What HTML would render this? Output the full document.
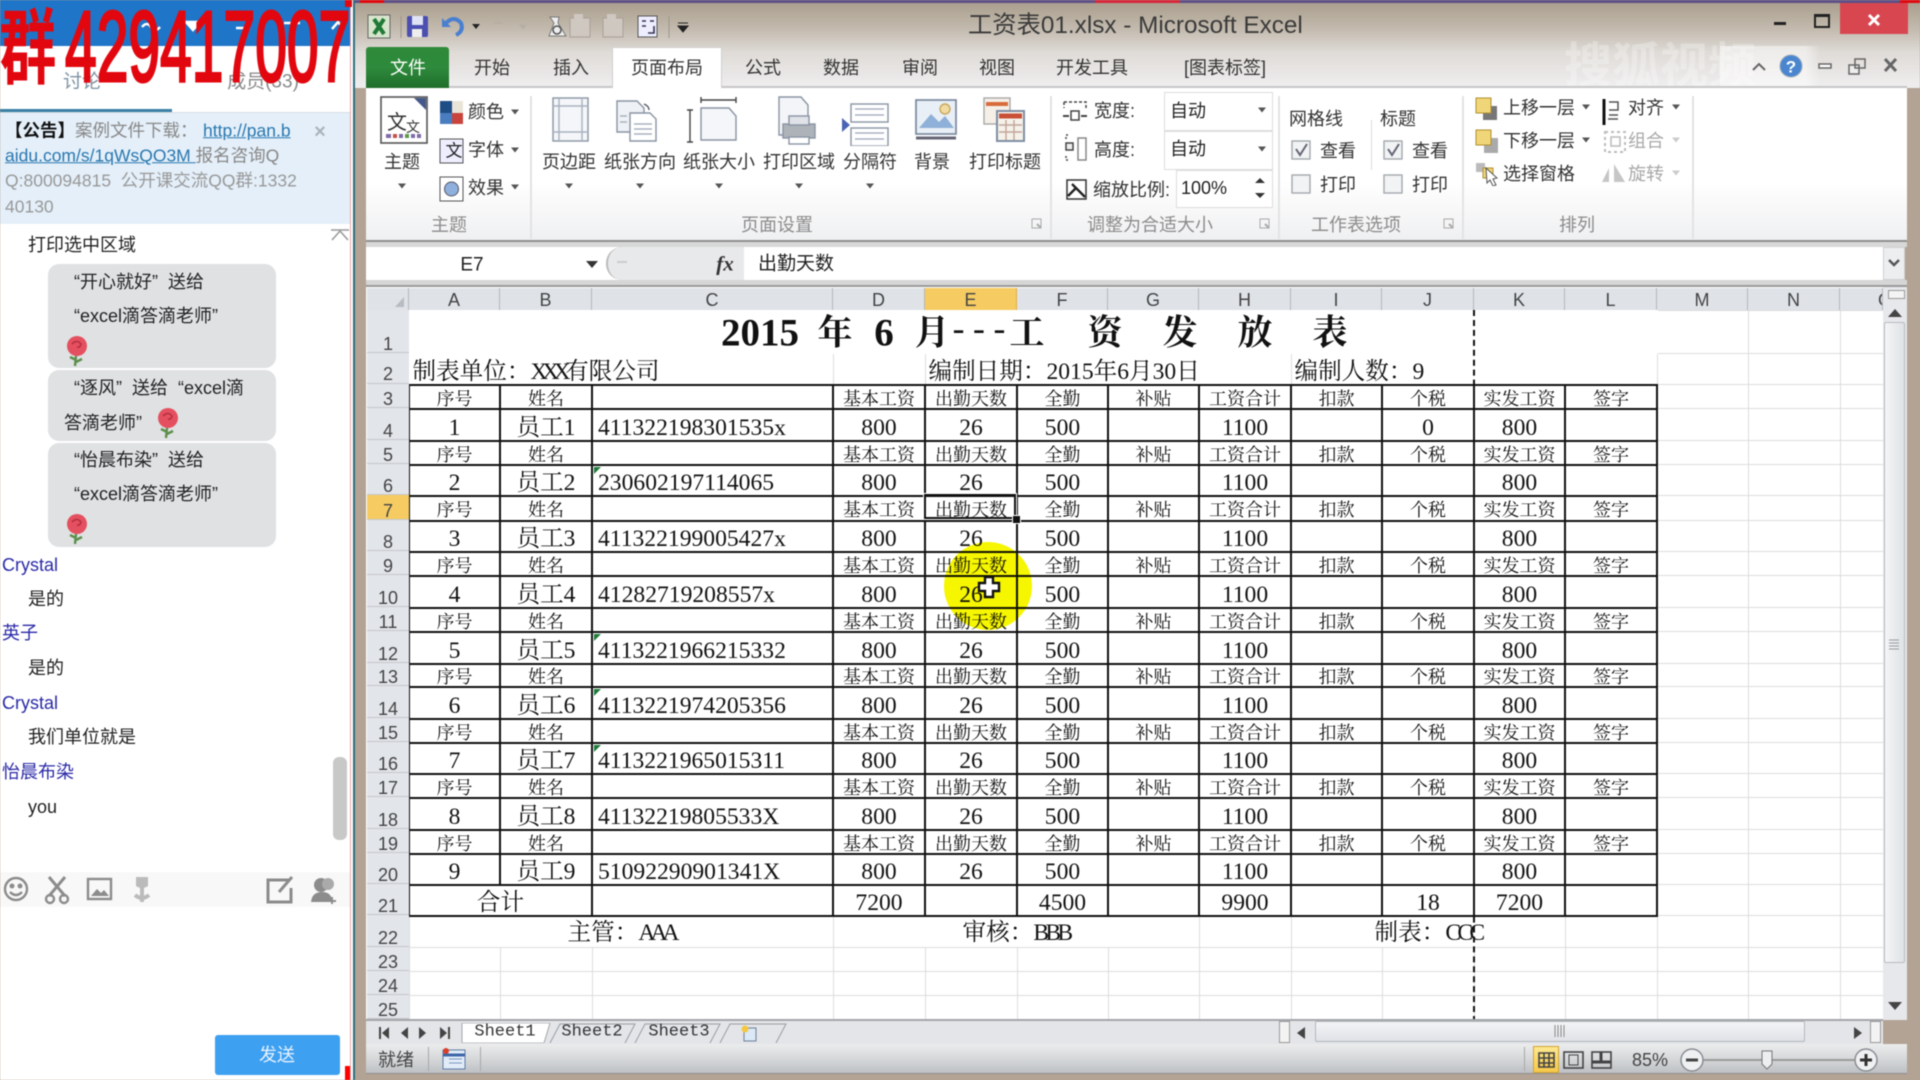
<!DOCTYPE html>
<html lang="zh"><head><meta charset="utf-8"><title>工资表01.xlsx - Microsoft Excel</title>
<style>
html,body{margin:0;padding:0}
body{width:1920px;height:1080px;overflow:hidden;position:relative;background:#b3a394;font-family:"Liberation Sans","Noto Sans CJK SC",sans-serif;color:#333;filter:blur(.45px)}
div,span,svg{position:absolute}
.c,.l{white-space:nowrap;line-height:1;font-size:18px;margin-top:1px}
.c{transform:translate(-50%,-50%)}
.l{transform:translateY(-50%)}
td span,.x{position:static}
.ar{width:0;height:0;border-left:4px solid transparent;border-right:4px solid transparent;border-top:5px solid #555;transform:translate(-50%,-50%)}
.g{color:#8b8b8b}
.d{color:#a8a8a8}
.sep{width:2px;top:96px;height:143px;background:#e2e3e5}
.chat{color:#222;font-size:18px}
.nm{color:#2a2aa8;font-size:18px}
.bb{left:48px;width:228px;background:#dfe1e3;border-radius:11px}
table{position:absolute;left:408px;top:310px;border-collapse:collapse;table-layout:fixed;width:1474px;font-family:"Liberation Serif","Noto Serif CJK SC",serif;color:#111}
td{border:1px solid #dcdcdc;padding:0;text-align:center;overflow:hidden;white-space:nowrap;font-size:23.6px;line-height:20px;vertical-align:middle}
tr.k td:nth-child(-n+12),tr.j td:nth-child(-n+11){border:2px solid #111}
tr.k td,tr.j td,tr.e td{padding-top:6px}
tr.o td{font-size:18px;line-height:16px;padding-top:4px}
tr.f td{padding-top:2px}
td.n{text-align:left;padding-left:5px;position:relative}
td b{font-weight:400}
i.tri{position:absolute;left:1px;top:1px;width:0;height:0;border-top:7px solid #1d7a3a;border-right:7px solid transparent}
.rh{left:367px;width:42px;background:#e2e5ea;border-bottom:1px solid #c4c6ca;box-sizing:border-box;color:#444;font-size:18px;line-height:18px;text-align:center}
.ch{top:288px;height:22px;background:#dfe3e8;border-right:1px solid #b4b7bc;box-sizing:border-box;color:#444;font-size:18px;line-height:25px;text-align:center}
.ti{font-family:"Liberation Serif","Noto Serif CJK SC",serif;font-weight:700;color:#111;font-size:35px;margin-top:0}
</style></head><body>

<!-- ===== chat panel ===== -->
<div style="left:0;top:0;width:350px;height:1080px;background:#fff"></div>
<div style="left:0;top:0;width:350px;height:46px;background:#1f75c8"></div>
<svg style="left:130px;top:14px" width="220" height="24" fill="none" stroke="#fff" stroke-width="2.5"><path d="M12 13q5-6 9 0t9 0"/><path d="M56 8h14l-7 8z" fill="#fff"/><path d="M106 14h14M154 9h16"/><path d="M202 15l6-7 6 7"/></svg>
<div class="c" style="left:82px;top:81px;font-size:19px;color:#7d93a3">讨论</div>
<div class="c" style="left:263px;top:81px;font-size:19px;color:#888">成员(33)</div>
<div style="left:0;top:109px;width:172px;height:3px;background:#3a7fa6"></div>
<div style="left:0;top:112px;width:350px;height:1px;background:#d6dde3"></div>
<div style="left:0;top:113px;width:350px;height:111px;background:#e4eff9"></div>
<div class="l" style="left:5px;top:130px;font-size:17.5px;color:#888"><span style="position:static;color:#111;font-weight:700">【公告】</span>案例文件下载：</div>
<div class="l" style="left:203px;top:130px;font-size:17.5px;color:#2a78b0;text-decoration:underline">http://pan.b</div>
<div class="c" style="left:320px;top:131px;font-size:20px;font-weight:700;color:#aab4bc">×</div>
<div class="l" style="left:5px;top:155px;font-size:17.5px;color:#888"><span style="position:static;color:#2a78b0;text-decoration:underline">aidu.com/s/1qWsQO3M </span>报名咨询Q</div>
<div class="l" style="left:5px;top:180px;font-size:17.5px;color:#999">Q:800094815&nbsp;&nbsp;公开课交流QQ群:1332</div>
<div class="l" style="left:5px;top:206px;font-size:17.5px;color:#999">40130</div>
<svg style="left:330px;top:228px" width="20" height="14" fill="none" stroke="#999" stroke-width="1.5"><path d="M2 12L10 3l8 9M1 2h18"/></svg>
<div class="l chat" style="left:28px;top:244px">打印选中区域</div>
<div class="bb" style="top:264px;height:104px"></div>
<div class="bb" style="top:370px;height:71px"></div>
<div class="bb" style="top:443px;height:104px"></div>
<div class="l chat" style="left:74px;top:281px">“开心就好”&nbsp;&nbsp;送给</div>
<div class="l chat" style="left:74px;top:315px">“excel滴答滴老师”</div>
<div class="l chat" style="left:74px;top:387px">“逐风”&nbsp;&nbsp;送给&nbsp;&nbsp;“excel滴</div>
<div class="l chat" style="left:64px;top:422px">答滴老师”</div>
<div class="l chat" style="left:74px;top:459px">“怡晨布染”&nbsp;&nbsp;送给</div>
<div class="l chat" style="left:74px;top:493px">“excel滴答滴老师”</div>
<svg width="0" height="0" style="left:0;top:0"><defs><symbol id="rose" viewBox="0 0 24 32"><path d="M11 21l-1 10M11 25l-6-3M11 27l6-3" stroke="#5c8f4c" stroke-width="2.4" fill="none"/><circle cx="12" cy="11" r="10" fill="#e4505f"/><path d="M7 9q5-5 9 0q-1 4-4 3" stroke="#b52f40" stroke-width="1.6" fill="none"/></symbol></defs></svg>
<svg style="left:65px;top:335px" width="24" height="32"><use href="#rose"/></svg>
<svg style="left:156px;top:407px" width="24" height="32"><use href="#rose"/></svg>
<svg style="left:65px;top:513px" width="24" height="32"><use href="#rose"/></svg>
<div class="l nm" style="left:2px;top:564px">Crystal</div>
<div class="l chat" style="left:28px;top:598px">是的</div>
<div class="l nm" style="left:2px;top:632px">英子</div>
<div class="l chat" style="left:28px;top:667px">是的</div>
<div class="l nm" style="left:2px;top:702px">Crystal</div>
<div class="l chat" style="left:28px;top:736px">我们单位就是</div>
<div class="l nm" style="left:2px;top:771px">怡晨布染</div>
<div class="l chat" style="left:28px;top:806px">you</div>
<div style="left:333px;top:757px;width:14px;height:83px;background:#c8c8c8;border-radius:6px"></div>
<div style="left:0;top:872px;width:350px;height:35px;background:#f8f8f8"></div>
<svg style="left:0;top:873px" width="350" height="34" fill="none" stroke="#8c8c8c" stroke-width="2.4">
<circle cx="16" cy="16" r="11"/><circle cx="12" cy="13" r="1.3" fill="#8c8c8c"/><circle cx="20" cy="13" r="1.3" fill="#8c8c8c"/><path d="M10 19q6 6 12 0"/>
<path d="M49 4l16 19M65 4L49 23" stroke-width="3"/><circle cx="50" cy="26" r="4"/><circle cx="64" cy="26" r="4"/>
<rect x="88" y="6" width="23" height="20"/><path d="M91 23l6-7 4 4 3-3 5 6z" fill="#8c8c8c" stroke="none"/>
<path d="M142 14v15M135 22q7 6 14 0" stroke="#bbb" stroke-width="4"/><path d="M136 4h12v9q-6 4-12 0z" fill="#bbb" stroke="none"/>
<path d="M290 7h-22v22h23V15" stroke-width="3"/><path d="M292 4l-13 15" stroke-width="3"/>
<circle cx="321" cy="12" r="7" fill="#8c8c8c" stroke="none"/><circle cx="328" cy="11" r="6" fill="#aaa" stroke="none"/><path d="M311 29q1-10 11-10t10 10z" fill="#8c8c8c" stroke="none"/><path d="M332 24v7M329 28h7" stroke-width="2"/>
</svg>
<div style="left:215px;top:1035px;width:125px;height:40px;background:#3ea0f0;border-radius:3px"></div>
<div class="c" style="left:277px;top:1054px;color:#e8f3ff;font-size:18px">发送</div>
<div style="left:345px;top:1066px;width:5px;height:14px;background:#f00"></div>
<div style="left:350px;top:0;width:1px;height:1080px;background:#e8a8a8"></div>
<div style="left:351px;top:0;width:2px;height:1080px;background:#fff"></div>
<div style="left:353px;top:0;width:2px;height:1080px;background:#2f6f80"></div>

<!-- red overlay -->
<div style="left:28px;top:42px;font:700 66px/1 'Noto Sans CJK SC',sans-serif;color:#e2070f;transform:translate(-50%,-50%) scale(.86,1.25);white-space:nowrap">群</div>
<div style="left:65px;top:-3px;font:400 100px/100px 'Liberation Sans',sans-serif;color:#e2070f;-webkit-text-stroke:3px #e2070f;transform:scaleX(.57);transform-origin:0 0;white-space:nowrap">429417007</div>
<div style="left:345px;top:0;width:7px;height:7px;background:#e2070f"></div>

<!-- ===== excel window ===== -->
<div style="left:355px;top:0;width:1565px;height:3px;background:#5d5088"></div>
<div style="left:355px;top:3px;width:1565px;height:85px;background:linear-gradient(#ab9f8e,#c4bcb0 32%,#dfdbd7 58%,#eeeded 95%)"></div>
<div style="left:360px;top:0;width:24px;height:3px;background:#e2070f"></div>
<div style="left:1095px;top:0;width:85px;height:3px;background:#d8263a"></div>
<div style="left:1900px;top:0;width:20px;height:3px;background:#e2070f"></div>
<div style="left:1720px;top:46px;width:100px;height:42px;background:linear-gradient(90deg,rgba(255,255,255,.5),rgba(255,255,255,.5) 85%,rgba(255,255,255,0))"></div>
<div class="c" style="left:1660px;top:66px;font-size:48px;color:#fff;opacity:.28;font-weight:700">搜狐视频</div>
<!-- QAT -->
<svg style="left:366px;top:12px" width="330" height="30">
<rect x="2" y="3" width="22" height="23" fill="#d6e5cc" stroke="#666"/><path d="M8 7l10 15M18 7L8 22" stroke="#1f7a35" stroke-width="4"/>
<rect x="41" y="4" width="21" height="21" fill="#4a4fb0" rx="2"/><rect x="46" y="4" width="11" height="9" fill="#dfe3f5"/><rect x="46" y="17" width="10" height="8" fill="#eee"/>
<path d="M80 11q8-8 15 0q3 8-5 12" fill="none" stroke="#4a7fd0" stroke-width="4"/><path d="M76 6v9h9z" fill="#4a7fd0"/>
<path d="M106 12h8l-4 5z" fill="#222"/>
<path d="M128 12q4-5 9 0M154 13h6l-3 4z" stroke="#b8afa4" fill="#b8afa4"/>
<path d="M184 5h9l-1 6 8 13h-17l5-13z" fill="#eee" stroke="#777"/><circle cx="191" cy="18" r="4" fill="none" stroke="#555" stroke-width="1.5"/>
<rect x="204" y="6" width="20" height="19" fill="#cfc8c0" stroke="#a9a097"/><rect x="208" y="2" width="9" height="6" fill="#cfc8c0"/>
<rect x="237" y="6" width="20" height="19" fill="#cfc8c0" stroke="#a9a097"/><rect x="241" y="2" width="9" height="6" fill="#cfc8c0"/>
<rect x="272" y="4" width="19" height="21" fill="#eef" stroke="#555"/><path d="M276 9h4M284 9h4M276 14h4M288 14v7h-6" stroke="#335" stroke-width="1.6" fill="none"/>
<path d="M35 4v22M303 4v22" stroke="#9f958a"/><path d="M312 11h10M312 14h10l-5 6z" fill="#222" stroke="#222"/>
</svg>
<div class="l" style="left:968px;top:25px;font-size:24.3px;color:#3a3a3a;white-space:nowrap">工资表01.xlsx - Microsoft Excel</div>
<!-- window controls -->
<div style="left:1774px;top:22px;width:12px;height:3px;background:#222"></div>
<div style="left:1814px;top:14px;width:12px;height:9px;border:2px solid #222;border-top-width:3px"></div>
<div style="left:1840px;top:3px;width:68px;height:31px;background:#d8474f"></div>
<svg style="left:1867px;top:13px" width="14" height="14" stroke="#fff" stroke-width="3"><path d="M2 2l10 10M12 2L2 12"/></svg>
<!-- tabs -->
<div style="left:366px;top:47px;width:83px;height:41px;background:linear-gradient(#2f8a3a,#2e8a3c 50%,#1f6e2a);border-radius:3px 3px 0 0"></div>
<div class="c" style="left:408px;top:67px;color:#fff;font-size:18px">文件</div>
<div style="left:449px;top:86px;width:1458px;height:2px;background:#c6c6c6"></div>
<div style="left:613px;top:48px;width:108px;height:42px;background:#fff;box-shadow:0 0 0 1px #cfcfcf"></div>
<div class="c" style="left:492px;top:67px">开始</div>
<div class="c" style="left:571px;top:67px">插入</div>
<div class="c" style="left:667px;top:67px">页面布局</div>
<div class="c" style="left:763px;top:67px">公式</div>
<div class="c" style="left:841px;top:67px">数据</div>
<div class="c" style="left:920px;top:67px">审阅</div>
<div class="c" style="left:997px;top:67px">视图</div>
<div class="c" style="left:1092px;top:67px">开发工具</div>
<div class="c" style="left:1225px;top:67px">[图表标签]</div>
<!-- inner controls -->
<svg style="left:1745px;top:50px" width="160" height="34" fill="none" stroke="#666">
<path d="M8 20l6-6 6 6" stroke-width="2"/>
<circle cx="46" cy="16" r="11" fill="#4a86cf" stroke="#9ab"/><path d="M74 14h12v4H74z" fill="#fff" stroke-width="1.5"/>
<rect x="104" y="15" width="10" height="9" stroke-width="1.5" fill="#eee"/><rect x="110" y="9" width="10" height="9" stroke-width="1.5"/>
<path d="M140 9l11 12M151 9l-11 12" stroke-width="3"/>
</svg>
<div class="c" style="left:1791px;top:66px;color:#fff;font-weight:700;font-size:17px">?</div>

<!-- ribbon -->
<div style="left:366px;top:88px;width:1541px;height:152px;background:linear-gradient(#fff,#fff 62%,#eff0f1)"></div>
<div class="sep" style="left:530px"></div><div class="sep" style="left:1050px"></div><div class="sep" style="left:1278px"></div><div class="sep" style="left:1462px"></div><div class="sep" style="left:1692px"></div>
<div style="left:1371px;top:120px;width:1px;height:50px;background:#dcdcdc"></div>
<div class="c g" style="left:449px;top:224px">主题</div>
<div class="c g" style="left:777px;top:224px">页面设置</div>
<div class="c g" style="left:1150px;top:224px">调整为合适大小</div>
<div class="c g" style="left:1356px;top:224px">工作表选项</div>
<div class="c g" style="left:1577px;top:224px">排列</div>
<svg style="left:1030px;top:217px" width="14" height="14" fill="none" stroke="#aaa"><path d="M2 2h9v9H2z"/><path d="M7 7l4 4" stroke-width="2"/></svg>
<svg style="left:1258px;top:217px" width="14" height="14" fill="none" stroke="#aaa"><path d="M2 2h9v9H2z"/><path d="M7 7l4 4" stroke-width="2"/></svg>
<svg style="left:1442px;top:217px" width="14" height="14" fill="none" stroke="#aaa"><path d="M2 2h9v9H2z"/><path d="M7 7l4 4" stroke-width="2"/></svg>

<!-- theme -->
<svg style="left:380px;top:96px" width="48" height="48"><rect x="1" y="1" width="46" height="46" fill="#fff" stroke="#555" stroke-width="1.6"/><path d="M34 2h12v12z" fill="#44598a"/><path d="M6 40h5M13 40h4M19 40h4M25 40h4M31 40h4M37 40h4" stroke-width="4" stroke="#7d6aa8"/><path d="M13 40h4" stroke="#c9503f" stroke-width="4"/><path d="M25 40h4" stroke="#5a9a4a" stroke-width="4"/></svg>
<div class="c" style="left:397px;top:122px;font-size:20px;color:#333">文</div>
<div class="c" style="left:413px;top:126px;font-size:14px;color:#333">文</div>
<div class="c" style="left:402px;top:161px">主题</div><div class="ar" style="left:402px;top:186px"></div>
<svg style="left:439px;top:99px" width="26" height="118"><rect x="1" y="2" width="12" height="12" fill="#1f4d86"/><rect x="13" y="2" width="11" height="12" fill="#e8e4d8"/><rect x="1" y="14" width="12" height="11" fill="#4a7dbf"/><rect x="13" y="14" width="11" height="11" fill="#c8443c"/><rect x="1" y="40" width="23" height="24" fill="#eef" stroke="#555"/><rect x="1" y="78" width="23" height="24" fill="#fff" stroke="#555"/><circle cx="12.500" cy="90" r="7" fill="#8fb0dd" stroke="#556"/></svg>
<div class="c" style="left:454px;top:150px;font-size:17px;color:#222">文</div>
<div class="l" style="left:468px;top:111px">颜色</div><div class="ar" style="left:515px;top:112px"></div>
<div class="l" style="left:468px;top:149px">字体</div><div class="ar" style="left:515px;top:150px"></div>
<div class="l" style="left:468px;top:187px">效果</div><div class="ar" style="left:515px;top:187px"></div>

<!-- page setup large -->
<svg style="left:548px;top:94px" width="500" height="52" fill="none" stroke="#8a94a4" stroke-width="1.4">
<rect x="5" y="4" width="35" height="43" fill="#f4f6f9"/><path d="M11 4v43M34 4v43M5 12h35M5 38h35" stroke="#aab2c0"/>
<path d="M69 7h20l7 7v24H69z" fill="#eef1f5"/><path d="M82 19h20l6 6v22H82z" fill="#fff"/><path d="M72 22h7M72 28h7M86 30h18M86 35h18M86 40h18" stroke="#aab2c0"/><path d="M96 10q5 2 5 6" stroke="#556"/>
<path d="M153 14h28l7 8v24h-35z" fill="#f4f6f9"/><path d="M142 16v32M139 16h6M139 48h6M153 6h35M153 3v6M188 3v6" stroke="#444"/>
<path d="M231 3h22l7 8v30h-29z" fill="#f3f5f8"/><rect x="235" y="30" width="32" height="14" fill="#aeb3ba"/><rect x="241" y="22" width="20" height="9" fill="#dfe2e6"/><rect x="241" y="43" width="20" height="7" fill="#fff"/>
<rect x="303" y="10" width="37" height="18" fill="#fff"/><path d="M307 15h29M307 21h29" stroke="#aab2c0"/><rect x="303" y="34" width="37" height="18" fill="#fff"/><path d="M307 39h29M307 45h29" stroke="#aab2c0"/><path d="M294 24l8 7-8 7z" fill="#4a63b5" stroke="none"/>
<rect x="368" y="6" width="40" height="34" fill="#e9eff6" stroke="#7f8ea3" stroke-width="1.8"/><path d="M371 34l12-14 8 8 6-6 9 12z" fill="#8fb0d8" stroke="none"/><circle cx="397" cy="15" r="5" fill="#f0dba0" stroke="#c9a860"/><path d="M368 44h40" stroke="#667" stroke-width="3"/>
<rect x="436" y="4" width="26" height="26" fill="#f6efe8" stroke="#a8a8a8"/><path d="M438 10h22" stroke="#d86c3c" stroke-width="4"/><rect x="449" y="17" width="27" height="30" fill="#f5f2ea" stroke="#7f8ea3" stroke-width="2"/><path d="M451 22h23" stroke="#c94f36" stroke-width="5"/><path d="M451 31h23M451 38h23M458 26v20M466 26v20" stroke="#c4a69a"/>
</svg>
<div class="c" style="left:569px;top:161px">页边距</div><div class="ar" style="left:569px;top:186px"></div>
<div class="c" style="left:640px;top:161px">纸张方向</div><div class="ar" style="left:640px;top:186px"></div>
<div class="c" style="left:719px;top:161px">纸张大小</div><div class="ar" style="left:719px;top:186px"></div>
<div class="c" style="left:799px;top:161px">打印区域</div><div class="ar" style="left:799px;top:186px"></div>
<div class="c" style="left:870px;top:161px">分隔符</div><div class="ar" style="left:870px;top:186px"></div>
<div class="c" style="left:932px;top:161px">背景</div>
<div class="c" style="left:1005px;top:161px">打印标题</div>

<!-- fit -->
<svg style="left:1060px;top:96px" width="50" height="108" fill="none" stroke="#444" stroke-width="1.5">
<path d="M4 6h22v6M4 6v6" stroke-dasharray="3 2"/><path d="M3 20h6M21 20h6" stroke-width="2"/><rect x="11" y="15" width="8" height="9" fill="#fff"/>
<path d="M6 43v-4h4M6 60v4h4" stroke-dasharray="2 2"/><rect x="6" y="47" width="7" height="7" fill="#eee"/><rect x="18" y="42" width="8" height="22" fill="#fff" stroke="#888"/>
<rect x="7" y="84" width="19" height="19" fill="#fff" stroke="#333"/><path d="M8 100l8-8 9 9M12 88l8 8" stroke="#222" stroke-width="2.4"/>
</svg>
<div class="l" style="left:1094px;top:110px">宽度:</div>
<div class="l" style="left:1094px;top:149px">高度:</div>
<div class="l" style="left:1093px;top:189px">缩放比例:</div>
<div style="left:1164px;top:92px;width:107px;height:37px;border:1px solid #dcdcdc;background:#fff"></div>
<div style="left:1164px;top:131px;width:107px;height:37px;border:1px solid #dcdcdc;background:#fff"></div>
<div style="left:1176px;top:170px;width:95px;height:36px;border:1px solid #dcdcdc;background:#fff"></div>
<div class="l" style="left:1170px;top:110px;color:#222">自动</div><div class="ar" style="left:1262px;top:110px"></div>
<div class="l" style="left:1170px;top:148px;color:#222">自动</div><div class="ar" style="left:1262px;top:149px"></div>
<div class="l" style="left:1181px;top:187px;color:#222">100%</div>
<svg style="left:1252px;top:174px" width="16" height="28" fill="#333"><path d="M3 9l5-5 5 5zM3 19l5 5 5-5z"/></svg>

<!-- sheet options -->
<div class="l" style="left:1289px;top:118px">网格线</div>
<div class="l" style="left:1380px;top:118px">标题</div>
<svg style="left:1290px;top:139px" width="160" height="56" fill="#f2f3f4" stroke="#a4a8ae" stroke-width="1.4"><rect x="2" y="2" width="18" height="18"/><rect x="2" y="36" width="18" height="18"/><rect x="94" y="2" width="18" height="18"/><rect x="94" y="36" width="18" height="18"/><path d="M6 10l4 6 7-11M98 10l4 6 7-11" fill="none" stroke="#667" stroke-width="2"/></svg>
<div class="l" style="left:1320px;top:150px">查看</div>
<div class="l" style="left:1320px;top:184px">打印</div>
<div class="l" style="left:1412px;top:150px">查看</div>
<div class="l" style="left:1412px;top:184px">打印</div>

<!-- arrange -->
<svg style="left:1474px;top:96px" width="200" height="90">
<rect x="9" y="10" width="14" height="14" fill="#777"/><rect x="2" y="2" width="15" height="15" fill="#f0d678" stroke="#b09030"/>
<rect x="10" y="42" width="14" height="15" fill="#aaa"/><rect x="2" y="34" width="15" height="15" fill="#f0d678" stroke="#b09030"/>
<rect x="2" y="67" width="9" height="9" fill="#bbb"/><rect x="9" y="72" width="10" height="10" fill="#f0d678" stroke="#b09030"/><path d="M12 72l11 10-4 1 3 6-3 1-3-6-3 3z" fill="#fff" stroke="#555"/>
<path d="M130 3v26" stroke="#111" stroke-width="3"/><path d="M135 6h9v8h-9M135 19h9M134 23h10" stroke="#555" fill="none" stroke-width="1.5"/>
<rect x="131" y="36" width="20" height="20" fill="none" stroke="#bbb" stroke-dasharray="3 3" stroke-width="2"/><rect x="137" y="41" width="9" height="9" fill="none" stroke="#bbb" stroke-width="1.5"/>
<path d="M128 86l7-14v14zM140 86V68l11 18z" fill="#c6c6c6"/>
</svg>
<div class="l" style="left:1503px;top:107px">上移一层</div><div class="ar" style="left:1586px;top:107px"></div>
<div class="l" style="left:1503px;top:140px">下移一层</div><div class="ar" style="left:1586px;top:140px"></div>
<div class="l" style="left:1503px;top:173px">选择窗格</div>
<div class="l" style="left:1628px;top:107px">对齐</div><div class="ar" style="left:1676px;top:107px"></div>
<div class="l d" style="left:1628px;top:140px">组合</div><div class="ar" style="left:1676px;top:140px;border-top-color:#ccc"></div>
<div class="l d" style="left:1628px;top:173px">旋转</div><div class="ar" style="left:1676px;top:173px;border-top-color:#ccc"></div>

<!-- formula bar -->
<div style="left:366px;top:240px;width:1541px;height:2px;background:#8f8f8f"></div>
<div style="left:366px;top:242px;width:1541px;height:5px;background:#d8d8d8"></div>
<div style="left:366px;top:247px;width:1517px;height:33px;background:#fff"></div>
<div style="left:606px;top:247px;width:138px;height:33px;background:#e8e9eb;border-radius:16px 0 0 16px;box-sizing:border-box;border-left:2px solid #bbb"></div>
<div class="c" style="left:472px;top:264px;font-size:19px;color:#222">E7</div>
<svg style="left:585px;top:259px" width="14" height="10"><path d="M1 2h12l-6 7z" fill="#333"/></svg>
<div style="left:617px;top:261px;width:10px;height:2px;background:#ccc"></div>
<div class="c" style="left:725px;top:263px;font:italic 700 21px/1 'Liberation Serif',serif;color:#333">fx</div>
<div class="l" style="left:758px;top:263px;font-size:19px;color:#222">出勤天数</div>
<div style="left:1883px;top:247px;width:22px;height:33px;background:#eceef0;border:1px solid #d0d0d0;box-sizing:border-box"></div>
<svg style="left:1887px;top:257px" width="14" height="12" fill="none" stroke="#555" stroke-width="2.4"><path d="M2 3l5 5 5-5"/></svg>
<div style="left:366px;top:280px;width:1541px;height:7px;background:#d6d6d6;border-bottom:2px solid #9a9a9a;box-sizing:border-box"></div>

<!-- grid -->
<div style="left:366px;top:287px;width:1541px;height:733px;background:#fff;overflow:hidden"></div>
<table>
<colgroup><col style="width:91px"><col style="width:92px"><col style="width:241px"><col style="width:92px"><col style="width:92px"><col style="width:91px"><col style="width:91px"><col style="width:92px"><col style="width:91px"><col style="width:92px"><col style="width:91px"><col style="width:92px"><col style="width:91px"><col style="width:92px"><col style="width:43px"></colgroup>
<tr style="height:43px"><td colspan="12" style="border-color:#fff"></td><td></td><td></td><td></td></tr>
<tr class="e" style="height:31px"><td colspan="3" class="n" style="padding-left:3px;border-left-color:#fff">制表单位：<span style="letter-spacing:-5.5px">XXX</span>有限公司</td><td></td><td colspan="4" class="n" style="padding-left:3px;overflow:visible">编制日期：2015年6月30日</td><td colspan="4" class="n" style="padding-left:3px">编制人数：9</td><td></td><td></td><td></td></tr>
<tr class="k o" style="height:24px"><td>序号</td><td>姓名</td><td></td><td>基本工资</td><td>出勤天数</td><td>全勤</td><td>补贴</td><td>工资合计</td><td>扣款</td><td>个税</td><td>实发工资</td><td>签字</td><td></td><td></td><td></td></tr>
<tr class="k" style="height:32px"><td>1</td><td>员工1</td><td class="n">411322198301535x</td><td>800</td><td>26</td><td>500</td><td></td><td>1100</td><td></td><td>0</td><td>800</td><td></td><td></td><td></td><td></td></tr>
<tr class="k o" style="height:24px"><td>序号</td><td>姓名</td><td></td><td>基本工资</td><td>出勤天数</td><td>全勤</td><td>补贴</td><td>工资合计</td><td>扣款</td><td>个税</td><td>实发工资</td><td>签字</td><td></td><td></td><td></td></tr>
<tr class="k" style="height:31px"><td>2</td><td>员工2</td><td class="n"><i class="tri"></i>230602197114065</td><td>800</td><td>26</td><td>500</td><td></td><td>1100</td><td></td><td></td><td>800</td><td></td><td></td><td></td><td></td></tr>
<tr class="k o" style="height:25px"><td>序号</td><td>姓名</td><td></td><td>基本工资</td><td>出勤天数</td><td>全勤</td><td>补贴</td><td>工资合计</td><td>扣款</td><td>个税</td><td>实发工资</td><td>签字</td><td></td><td></td><td></td></tr>
<tr class="k" style="height:31px"><td>3</td><td>员工3</td><td class="n">411322199005427x</td><td>800</td><td>26</td><td>500</td><td></td><td>1100</td><td></td><td></td><td>800</td><td></td><td></td><td></td><td></td></tr>
<tr class="k o" style="height:24px"><td>序号</td><td>姓名</td><td></td><td>基本工资</td><td>出勤天数</td><td>全勤</td><td>补贴</td><td>工资合计</td><td>扣款</td><td>个税</td><td>实发工资</td><td>签字</td><td></td><td></td><td></td></tr>
<tr class="k" style="height:32px"><td>4</td><td>员工4</td><td class="n">41282719208557x</td><td>800</td><td>26</td><td>500</td><td></td><td>1100</td><td></td><td></td><td>800</td><td></td><td></td><td></td><td></td></tr>
<tr class="k o" style="height:24px"><td>序号</td><td>姓名</td><td></td><td>基本工资</td><td>出勤天数</td><td>全勤</td><td>补贴</td><td>工资合计</td><td>扣款</td><td>个税</td><td>实发工资</td><td>签字</td><td></td><td></td><td></td></tr>
<tr class="k" style="height:32px"><td>5</td><td>员工5</td><td class="n"><i class="tri"></i>4113221966215332</td><td>800</td><td>26</td><td>500</td><td></td><td>1100</td><td></td><td></td><td>800</td><td></td><td></td><td></td><td></td></tr>
<tr class="k o" style="height:23px"><td>序号</td><td>姓名</td><td></td><td>基本工资</td><td>出勤天数</td><td>全勤</td><td>补贴</td><td>工资合计</td><td>扣款</td><td>个税</td><td>实发工资</td><td>签字</td><td></td><td></td><td></td></tr>
<tr class="k" style="height:32px"><td>6</td><td>员工6</td><td class="n"><i class="tri"></i>4113221974205356</td><td>800</td><td>26</td><td>500</td><td></td><td>1100</td><td></td><td></td><td>800</td><td></td><td></td><td></td><td></td></tr>
<tr class="k o" style="height:24px"><td>序号</td><td>姓名</td><td></td><td>基本工资</td><td>出勤天数</td><td>全勤</td><td>补贴</td><td>工资合计</td><td>扣款</td><td>个税</td><td>实发工资</td><td>签字</td><td></td><td></td><td></td></tr>
<tr class="k" style="height:31px"><td>7</td><td>员工7</td><td class="n"><i class="tri"></i>4113221965015311</td><td>800</td><td>26</td><td>500</td><td></td><td>1100</td><td></td><td></td><td>800</td><td></td><td></td><td></td><td></td></tr>
<tr class="k o" style="height:24px"><td>序号</td><td>姓名</td><td></td><td>基本工资</td><td>出勤天数</td><td>全勤</td><td>补贴</td><td>工资合计</td><td>扣款</td><td>个税</td><td>实发工资</td><td>签字</td><td></td><td></td><td></td></tr>
<tr class="k" style="height:32px"><td>8</td><td>员工8</td><td class="n">41132219805533X</td><td>800</td><td>26</td><td>500</td><td></td><td>1100</td><td></td><td></td><td>800</td><td></td><td></td><td></td><td></td></tr>
<tr class="k o" style="height:24px"><td>序号</td><td>姓名</td><td></td><td>基本工资</td><td>出勤天数</td><td>全勤</td><td>补贴</td><td>工资合计</td><td>扣款</td><td>个税</td><td>实发工资</td><td>签字</td><td></td><td></td><td></td></tr>
<tr class="k" style="height:31px"><td>9</td><td>员工9</td><td class="n">51092290901341X</td><td>800</td><td>26</td><td>500</td><td></td><td>1100</td><td></td><td></td><td>800</td><td></td><td></td><td></td><td></td></tr>
<tr class="j" style="height:31px"><td colspan="2">合计</td><td></td><td>7200</td><td></td><td>4500</td><td></td><td>9900</td><td></td><td>18</td><td>7200</td><td></td><td></td><td></td><td></td></tr>
<tr class="f" style="height:32px"><td colspan="3">主管：<span style="letter-spacing:-5px">AAA</span></td><td colspan="4">审核：<span style="letter-spacing:-3.7px">BBB</span></td><td></td><td colspan="3">制表：<span style="letter-spacing:-3.7px">CCC</span></td><td></td><td></td><td></td><td></td></tr>
<tr style="height:24px"><td></td><td></td><td></td><td></td><td></td><td></td><td></td><td></td><td></td><td></td><td></td><td></td><td></td><td></td><td></td></tr>
<tr style="height:24px"><td></td><td></td><td></td><td></td><td></td><td></td><td></td><td></td><td></td><td></td><td></td><td></td><td></td><td></td><td></td></tr>
<tr style="height:24px"><td></td><td></td><td></td><td></td><td></td><td></td><td></td><td></td><td></td><td></td><td></td><td></td><td></td><td></td><td></td></tr>
</table>

<!-- title row -->
<div class="c ti" style="left:760px;top:333px;font-size:39px">2015</div>
<div class="c ti" style="left:835px;top:333px">年</div>
<div class="c ti" style="left:884px;top:333px;font-size:39px">6</div>
<div class="c ti" style="left:932px;top:333px">月</div>
<div class="c" style="left:979px;top:333px;margin-top:0;font:400 34px/1 'Liberation Mono',monospace;color:#111">---</div>
<div class="c ti" style="left:1027px;top:333px">工</div>
<div class="c ti" style="left:1105px;top:333px">资</div>
<div class="c ti" style="left:1180px;top:333px">发</div>
<div class="c ti" style="left:1255px;top:333px">放</div>
<div class="c ti" style="left:1330px;top:333px">表</div>

<!-- headers -->
<div style="left:367px;top:288px;width:42px;height:22px;background:#dfe3e8;border-right:1px solid #b4b7bc;box-sizing:border-box"></div>
<svg style="left:394px;top:296px" width="12" height="12"><path d="M10 1v10H1z" fill="#b8bcc2"/></svg>
<div class="ch" style="left:409px;width:91px">A</div><div class="ch" style="left:500px;width:92px">B</div><div class="ch" style="left:592px;width:241px">C</div><div class="ch" style="left:833px;width:92px">D</div><div class="ch" style="left:925px;width:92px;background:#f5cb62;border-color:#e0b040">E</div><div class="ch" style="left:1017px;width:91px">F</div><div class="ch" style="left:1108px;width:91px">G</div><div class="ch" style="left:1199px;width:92px">H</div><div class="ch" style="left:1291px;width:91px">I</div><div class="ch" style="left:1382px;width:92px">J</div><div class="ch" style="left:1474px;width:91px">K</div><div class="ch" style="left:1565px;width:92px">L</div><div class="ch" style="left:1657px;width:91px">M</div><div class="ch" style="left:1748px;width:92px">N</div><div class="ch" style="left:1840px;width:43px;text-align:left;padding-left:38px;overflow:hidden">O</div>

<div class="rh" style="top:310px;height:43px;padding-top:25px">1</div>
<div class="rh" style="top:353px;height:31px;padding-top:12px">2</div>
<div class="rh" style="top:384px;height:24px;padding-top:6px">3</div>
<div class="rh" style="top:408px;height:32px;padding-top:14px">4</div>
<div class="rh" style="top:440px;height:24px;padding-top:6px">5</div>
<div class="rh" style="top:464px;height:31px;padding-top:13px">6</div>
<div class="rh" style="top:495px;height:25px;padding-top:7px;background:#f5cb62">7</div>
<div class="rh" style="top:520px;height:31px;padding-top:13px">8</div>
<div class="rh" style="top:551px;height:24px;padding-top:6px">9</div>
<div class="rh" style="top:575px;height:32px;padding-top:14px">10</div>
<div class="rh" style="top:607px;height:24px;padding-top:6px">11</div>
<div class="rh" style="top:631px;height:32px;padding-top:14px">12</div>
<div class="rh" style="top:663px;height:23px;padding-top:5px">13</div>
<div class="rh" style="top:686px;height:32px;padding-top:14px">14</div>
<div class="rh" style="top:718px;height:24px;padding-top:6px">15</div>
<div class="rh" style="top:742px;height:31px;padding-top:13px">16</div>
<div class="rh" style="top:773px;height:24px;padding-top:6px">17</div>
<div class="rh" style="top:797px;height:32px;padding-top:14px">18</div>
<div class="rh" style="top:829px;height:24px;padding-top:6px">19</div>
<div class="rh" style="top:853px;height:31px;padding-top:13px">20</div>
<div class="rh" style="top:884px;height:31px;padding-top:13px">21</div>
<div class="rh" style="top:915px;height:32px;padding-top:14px">22</div>
<div class="rh" style="top:947px;height:24px;padding-top:6px">23</div>
<div class="rh" style="top:971px;height:24px;padding-top:6px">24</div>
<div class="rh" style="top:995px;height:24px;padding-top:6px">25</div>

<!-- selection, dashed break, highlight -->
<div style="left:924px;top:494px;width:92px;height:25px;border:2px solid #111;outline:1px solid #fff;box-sizing:border-box"></div>
<div style="left:1012px;top:515px;width:7px;height:7px;background:#111;border:1px solid #fff"></div>
<div style="left:1473px;top:310px;width:0;height:712px;border-left:2px dashed #111"></div>
<div style="left:944px;top:542px;width:88px;height:88px;border-radius:50%;background:#f6f600;mix-blend-mode:multiply"></div>
<svg style="left:976px;top:574px" width="26" height="26"><path d="M9 3h8v6h6v8h-6v6H9v-6H3V9h6z" fill="#fff" stroke="#111" stroke-width="2.4"/></svg>

<!-- vscroll -->
<div style="left:1883px;top:287px;width:24px;height:733px;background:#e6e8ec"></div>
<div style="left:1888px;top:290px;width:17px;height:9px;background:#f4f4f4;border:1px solid #999;box-sizing:border-box"></div>
<svg style="left:1886px;top:306px" width="18" height="12"><path d="M2 11h14L9 3z" fill="#444"/></svg>
<div style="left:1884px;top:322px;width:21px;height:641px;background:linear-gradient(90deg,#f4f5f7,#dfe2e6);border:1px solid #b8bbc0;box-sizing:border-box;border-radius:2px"></div>
<svg style="left:1887px;top:638px" width="14" height="12" stroke="#999"><path d="M2 2h10M2 5h10M2 8h10M2 11h10"/></svg>
<svg style="left:1886px;top:1000px" width="18" height="12"><path d="M2 2h14L9 10z" fill="#444"/></svg>

<!-- tabs row -->
<div style="left:366px;top:1019px;width:1517px;height:25px;background:#e3e5e9;border-top:2px solid #a4a6aa;box-sizing:border-box"></div>
<svg style="left:372px;top:1023px" width="420" height="20">
<path d="M8 4v12" stroke="#444" stroke-width="2"/><path d="M17 4l-7 6 7 6zM36 4l-7 6 7 6zM47 4l7 6-7 6z" fill="#444"/><path d="M68 4l7 6-7 6z" fill="#444"/><path d="M77 4v12" stroke="#444" stroke-width="2"/>
<path d="M90 20V0h88l-6 20z" fill="#fff" stroke="#a4a6aa"/>
<path d="M178 20l10-19h75l-10 19M263 20l10-19h75l-10 19" fill="none" stroke="#9a9da2"/>
<path d="M348 20l10-19h56l-10 19" fill="none" stroke="#9a9da2"/>
<rect x="372" y="5" width="12" height="13" fill="#dbe8f5" stroke="#6b7f99"/><circle cx="373" cy="6" r="3.500" fill="#f5c842"/>
</svg>
<div class="c" style="left:505px;top:1031px;font:17px/1 'Liberation Mono',monospace;color:#333">Sheet1</div>
<div class="c" style="left:592px;top:1031px;font:17px/1 'Liberation Mono',monospace;color:#333">Sheet2</div>
<div class="c" style="left:679px;top:1031px;font:17px/1 'Liberation Mono',monospace;color:#333">Sheet3</div>
<!-- hscroll -->
<div style="left:1279px;top:1021px;width:11px;height:22px;background:#f3f3f3;border:1px solid #9a9a9a;box-sizing:border-box"></div>
<svg style="left:1294px;top:1026px" width="14" height="14"><path d="M11 1L3 7l8 6z" fill="#444"/></svg>
<div style="left:1315px;top:1021px;width:490px;height:21px;background:linear-gradient(#f3f4f6,#dfe2e6);border:1px solid #b4b7bc;box-sizing:border-box;border-radius:2px"></div>
<svg style="left:1553px;top:1024px" width="14" height="14" stroke="#888"><path d="M2 1v12M5 1v12M8 1v12M11 1v12"/></svg>
<svg style="left:1851px;top:1026px" width="14" height="14"><path d="M3 1l8 6-8 6z" fill="#444"/></svg>
<div style="left:1870px;top:1021px;width:11px;height:22px;background:#f3f3f3;border:1px solid #9a9a9a;box-sizing:border-box"></div>

<!-- status bar -->
<div style="left:366px;top:1044px;width:1541px;height:29px;background:linear-gradient(#eceded,#d6d8da 50%,#bdc0c4)"></div>
<div class="c" style="left:396px;top:1059px;font-size:18px;color:#444">就绪</div>
<div style="left:428px;top:1047px;width:1px;height:24px;background:#a8a8a8"></div>
<div style="left:480px;top:1047px;width:1px;height:24px;background:#a8a8a8"></div>
<svg style="left:441px;top:1047px" width="26" height="24"><rect x="2" y="3" width="22" height="19" fill="#e2ecf8" stroke="#5d7aa8"/><path d="M2 8h22" stroke="#3d66a8" stroke-width="3"/><path d="M8 12h13M8 16h13" stroke="#7a95c0"/><circle cx="5" cy="4" r="3" fill="#d8402c"/></svg>
<div style="left:1524px;top:1047px;width:1px;height:24px;background:#a8a8a8"></div>
<div style="left:1533px;top:1046px;width:26px;height:27px;background:linear-gradient(#fde890,#f6c84a);border:1px solid #d4a430;box-sizing:border-box"></div>
<svg style="left:1533px;top:1046px" width="85" height="27" fill="none" stroke="#444" stroke-width="1.6">
<path d="M6 7h15v14H6zM6 12h15M6 17h15M11 7v14M16 7v14"/>
<rect x="31" y="6" width="19" height="16"/><rect x="36" y="9" width="9" height="10" stroke-width="1"/>
<rect x="59" y="6" width="19" height="16"/><path d="M68 6v10M59 16h19" stroke-width="3"/>
</svg>
<div class="c" style="left:1650px;top:1059px;font-size:18px;color:#444">85%</div>
<div style="left:1700px;top:1059px;width:156px;height:2px;background:#9a9a9a"></div>
<svg style="left:1678px;top:1046px" width="200" height="28">
<circle cx="14" cy="14" r="11" fill="#eef0f2" stroke="#8a8d92" stroke-width="1.5"/><path d="M8 14h12" stroke="#444" stroke-width="3"/>
<path d="M84 5h10v13l-5 5-5-5z" fill="#eceef0" stroke="#777"/>
<circle cx="188" cy="14" r="11" fill="#eef0f2" stroke="#8a8d92" stroke-width="1.500"/><path d="M182 14h12M188 8v12" stroke="#333" stroke-width="3"/>
</svg>
<div style="left:366px;top:1073px;width:1541px;height:1px;background:#8f8f8f"></div>
</body></html>
